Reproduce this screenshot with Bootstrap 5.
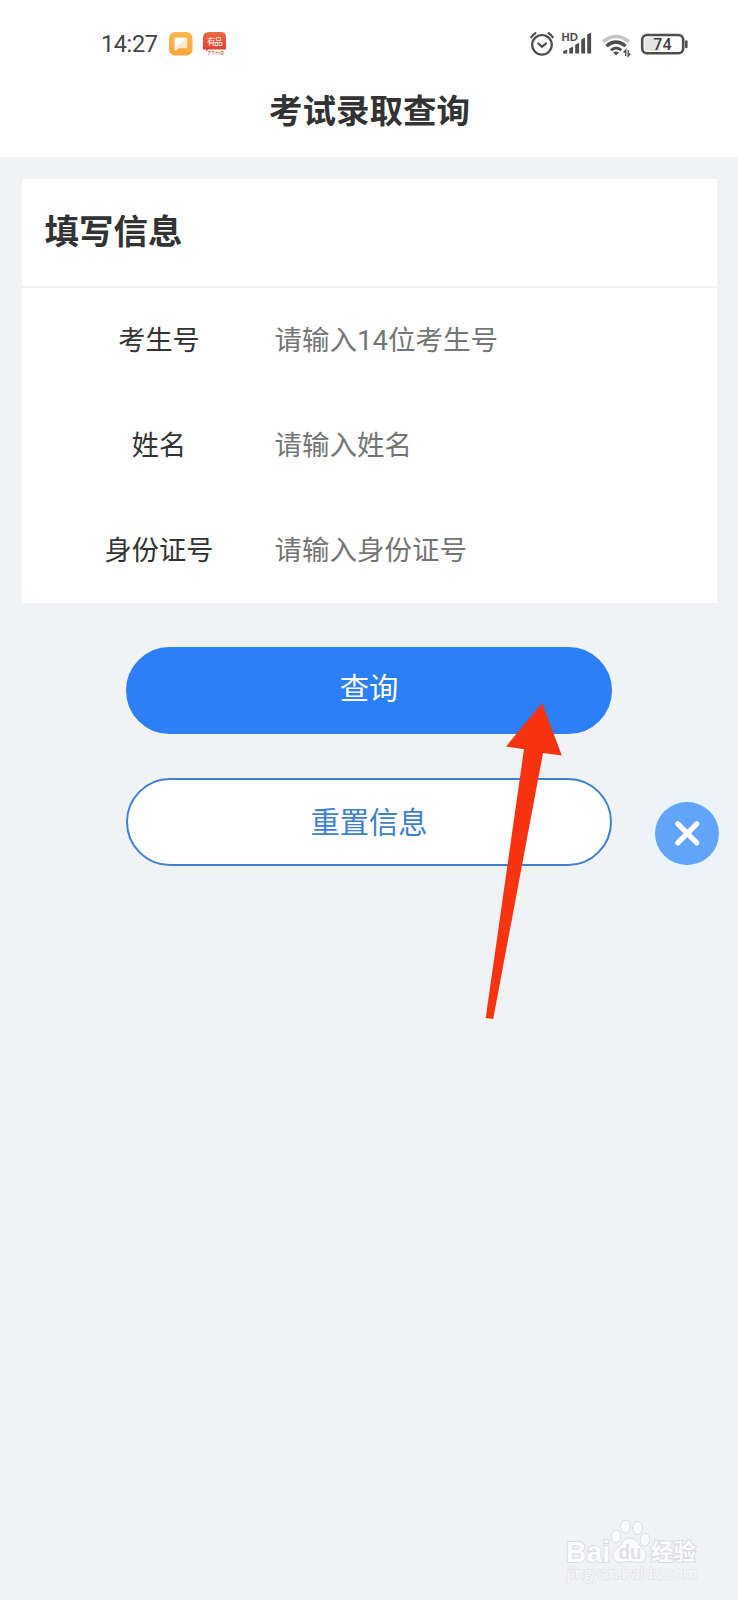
<!DOCTYPE html>
<html lang="zh-CN">
<head>
<meta charset="utf-8">
<meta name="viewport" content="width=device-width, initial-scale=1">
<title>考试录取查询</title>
<link href="https://cdn.jsdelivr.net/npm/bootstrap@5.3.0/dist/css/bootstrap.min.css" rel="stylesheet">
<style>
  body { font-family: Roboto, "Noto Sans CJK SC", sans-serif; background: #f0f2f6; color: #333; min-height: 1600px; }
  .app-head { height: 157px; background: #fff; }
  .status-bar { height: 87px; padding: 0 50px 0 101px; color: #444; }
  .clock { font-size: 23.5px; line-height: 24px; width: 57px; margin-right: 9.500px; letter-spacing: -.4px; padding-top: 1px; }
  .page-title { font-size: 33.5px; line-height: 50px; font-weight: 700; padding-left: 1px; }
  .form-panel { margin: 21.500px 21px 0 21.500px; height: 424.500px; background: #fff; }
  .panel-head { height: 109px; padding: 28px 0 0 23px; border-bottom: 2px solid #f0f1f3; }
  .panel-head h2 { font-size: 34.5px; line-height: 50px; font-weight: 700; }
  .field { height: 105px; font-size: 27.2px; padding-top: 2px; }
  .field label { width: 275px; line-height: 40px; }
  .field input { font-size: 27.5px; line-height: 40px; color: #333; margin-left: -22px; width: 0; }
  .field input::placeholder { color: #757575; opacity: 1; }
  .actions { width: 486.500px; margin: 43.500px auto 0; gap: 44px; }
  .actions .btn { height: 87.5px; font-size: 29.3px; border-width: 2px; padding: 0; }
  .btn-query { background: #2d7ff8; border-color: #2d7ff8; color: #fff; }
  .actions .btn-reset { background: #fff; border-color: #3f80d3; color: #3f80d3; padding-top: 5px; }
  .pointer { left: 480px; top: 698px; }
  .close-float { left: 655px; top: 802px; width: 63.5px; height: 63px; background: #61a5fb; box-shadow: 0 0 16px 3px #e2f6ff; }
  .watermark { left: 560px; top: 1514px; }
</style>
</head>
<body class="position-relative">
<header class="app-head">
  <div class="status-bar d-flex align-items-center">
    <span class="clock text-nowrap">14:27</span>
    <svg class="me-2" width="26" height="26" viewBox="0 0 26 26">
      <defs>
        <linearGradient id="amber" x2="0" y2="1"><stop stop-color="#f8b84d"/><stop offset="1" stop-color="#fba63c"/></linearGradient>
        <linearGradient id="coral" x2="0" y2="1"><stop stop-color="#ed6943"/><stop offset="1" stop-color="#e33f2c"/></linearGradient>
      </defs>
      <rect x="1" y="1" width="23.500" height="23.500" rx="6" fill="url(#amber)"/>
      <path d="M8 6.800h10q1.200 0 1.200 1.200v8q0 1.200-1.200 1.200h-7l-4.300 3.300V8q0-1.200 1.300-1.200z" fill="#fdeaca"/>
      <path d="M8 6.800h10.500L6.700 18V8q0-1.200 1.300-1.200z" fill="#fff"/>
    </svg>
    <svg width="26" height="28" viewBox="0 0 26 28">
      <path d="M7 2h12q5 0 5 5v12.500H6.500L4 21V19.500H1V8q0-6 6-6z" fill="url(#coral)"/>
      <text x="5" y="15" font-size="8.600" textLength="15.800" font-family="Noto Sans CJK SC, sans-serif" fill="#fff">有品</text>
      <path d="M5.500 21.500h3l-2 3M10 21.500h2m-1 0v3m3-3v3m0-2h2m1-1v3m2-3h2v3h-2z" fill="none" stroke="#c68a75"/>
    </svg>
    <svg class="ms-auto" width="160" height="28" viewBox="528 30 160 28" fill="none" stroke="#4e4e4e">
      <g stroke-width="2.200" stroke-linecap="round">
        <circle cx="542" cy="44.800" r="9.800"/>
        <path d="M538.300 43.500l3.700 3.400 4-3.400M531.300 37.300q1.500-2.600 4.100-4.100M552.700 37.300q-1.500-2.600-4.100-4.100"/>
      </g>
      <text x="561.500" y="40.800" font-size="11.300" font-weight="700" font-family="Liberation Sans, sans-serif" fill="#4e4e4e" stroke="none">HD</text>
      <path d="M563 53.500v-2.300l4.200-1.700v4zM569.200 53.500v-5l3.900-2v7zM575.200 53.500V44.800l3.900-2v10.700zM581.200 53.500V39.400l3.900-2v16.100zM587.200 53.500V34.500l3.900-2v21z" fill="#4e4e4e" stroke="none"/>
      <path d="M603 41.600q12.700-10.200 26 0" stroke="#c5c5c5" stroke-width="3.300"/>
      <path d="M606.500 46q9.500-8 19 0" stroke-width="3.400"/>
      <path d="M611 50.200q5-4.300 10.300 0" stroke-width="3"/>
      <path d="M613.200 52.500q2.800-2 5.800 0l-2.900 2.900z" fill="#4e4e4e" stroke="none"/>
      <path d="M625.700 56v-6l-2 2.700M628.200 50v6l2-2.700" stroke-width="1.400"/>
      <rect x="642.200" y="35" width="41" height="18.200" rx="4.800" stroke-width="2.600"/>
      <path d="M647 37.500h13v13.500h-13q-2.300 0-2.300-2.300v-9q0-2.200 2.300-2.200z" fill="#e4e4e4" stroke="none"/>
      <text x="662.400" y="50" text-anchor="middle" font-size="16" font-weight="500" font-family="Roboto, sans-serif" fill="#3f3f3f" stroke="none">74</text>
      <path d="M686.300 41.500v5.500" stroke-width="2.600" stroke-linecap="round"/>
    </svg>
  </div>
  <h1 class="page-title text-center m-0">考试录取查询</h1>
</header>

<main>
  <form class="form-panel">
    <div class="panel-head"><h2 class="m-0">填写信息</h2></div>
    <div class="field d-flex align-items-center">
      <label for="examNo" class="text-center flex-shrink-0">考生号</label>
      <input id="examNo" class="form-control border-0 bg-transparent p-0 flex-fill" placeholder="请输入14位考生号">
    </div>
    <div class="field d-flex align-items-center">
      <label for="fullName" class="text-center flex-shrink-0">姓名</label>
      <input id="fullName" class="form-control border-0 bg-transparent p-0 flex-fill" placeholder="请输入姓名">
    </div>
    <div class="field d-flex align-items-center">
      <label for="idNo" class="text-center flex-shrink-0">身份证号</label>
      <input id="idNo" class="form-control border-0 bg-transparent p-0 flex-fill" placeholder="请输入身份证号">
    </div>
  </form>
  <div class="actions d-flex flex-column">
    <button type="button" class="btn btn-query rounded-pill">查询</button>
    <button type="button" class="btn btn-reset rounded-pill">重置信息</button>
  </div>
</main>

<svg class="pointer position-absolute" width="90" height="326" viewBox="480 698 90 326">
  <path d="M542 703L506 746.500l18 2.700L485.700 1018l7.500 1L543 753l18.800 2.500z" fill="#f7340f"/>
</svg>

<button type="button" class="close-float position-absolute rounded-circle border-0 p-0" aria-label="关闭">
  <svg class="d-block" width="63" height="63" viewBox="0 0 63 63"><path d="M22.800 21.800l19 19M41.800 21.800l-19 19" stroke="#fff" stroke-width="5.200" stroke-linecap="round"/></svg>
</button>

<svg class="watermark position-absolute" width="150" height="74" viewBox="560 1514 150 74" fill="#fafbfd" stroke="#dadce2" stroke-width="1">
  <g font-family="Liberation Sans, sans-serif" font-weight="700">
    <text x="566" y="1561.500" font-size="30" textLength="44" lengthAdjust="spacingAndGlyphs" stroke-width="2" paint-order="stroke">Bai</text>
    <ellipse cx="616" cy="1536.500" rx="4.800" ry="6.300"/>
    <ellipse cx="625.500" cy="1526.500" rx="5" ry="6.500"/>
    <ellipse cx="637.500" cy="1528" rx="5" ry="6.500"/>
    <ellipse cx="645" cy="1539.500" rx="4.800" ry="6.300"/>
    <path d="M630 1538c6 0 8 5 11 9 3 3 5 4 5 8 0 5-3 7.500-7 7.500-3 0-5-1-9-1s-6 1-9 1c-5 0-8-3-8-7.500 0-4 3-5 6-8 3-4 5-9 11-9z"/>
    <text x="618.500" y="1558.500" font-size="20" textLength="23" lengthAdjust="spacingAndGlyphs" fill="#dfe1e6" stroke="none">du</text>
  </g>
  <text x="651" y="1560" font-size="22.500" font-weight="700" font-family="Noto Sans CJK SC, sans-serif" stroke-width="2" paint-order="stroke">经验</text>
  <text x="567" y="1579" font-size="15.500" textLength="130" font-family="Open Sans, sans-serif" stroke="#e0e2e7" stroke-width="1.400" paint-order="stroke">jingyan.baidu.com</text>
</svg>
<script src="https://cdn.jsdelivr.net/npm/bootstrap@5.3.0/dist/js/bootstrap.bundle.min.js"></script>
</body>
</html>
